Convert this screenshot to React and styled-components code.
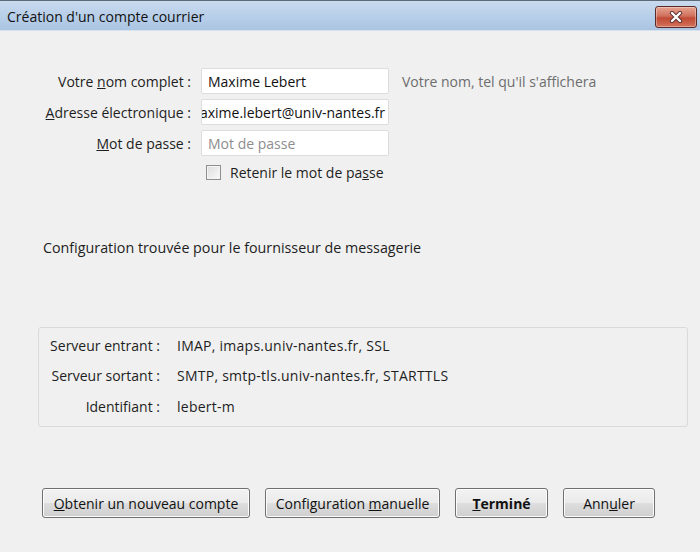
import styled, { createGlobalStyle } from 'styled-components';

const GlobalStyle = createGlobalStyle`
	html, body {
		margin: 0;
		padding: 0;
		background: #f0f0f0;
	}
	body {
		font-family: 'Open Sans', 'Noto Sans', sans-serif;
		font-size: 14px;
		color: #1e1e1e;
	}
`;

const Window = styled.div`
	width: 700px;
	height: 552px;
	display: flex;
	flex-direction: column;
	background: #f0f0f0;
	overflow: hidden;
`;

const TitleBar = styled.div`
	height: 31px;
	flex: none;
	display: flex;
	align-items: center;
	justify-content: space-between;
	padding: 0 3px 0 7px;
	box-sizing: border-box;
	background: linear-gradient(#c9daee, #b5cde8 60%, #aac4e2);
	border-top: 1px solid #5d6a7a;
	border-bottom: 1px solid #d6e2f0;
`;

const Title = styled.div`
	font-size: 14px;
	color: #111;
	padding-top: 2px;
`;

const CloseButton = styled.div`
	width: 40px;
	height: 20px;
	margin-top: 3px;
	border: 1px solid #5a2a2a;
	border-radius: 3px;
	background: linear-gradient(#e8a493, #d0715c 45%, #c04a35 55%, #d2735b);
	display: flex;
	align-items: center;
	justify-content: center;
	box-shadow: inset 0 0 0 1px rgba(255, 255, 255, 0.35);
`;

const Body = styled.div`
	flex: 1;
	display: flex;
	flex-direction: column;
	padding-top: 37px;
`;

const Form = styled.div`
	display: grid;
	grid-template-columns: 191px 188px auto;
	column-gap: 10px;
	row-gap: 5px;
	align-items: center;
`;

const Label = styled.div`
	text-align: right;
	white-space: nowrap;
`;

const Field = styled.div`
	height: 26px;
	box-sizing: border-box;
	border: 1px solid #dddddd;
	border-radius: 2px;
	background: #fff;
	display: flex;
	align-items: center;
	justify-content: ${(p) => (p.$scrolled ? 'flex-end' : 'flex-start')};
	padding: ${(p) => (p.$scrolled ? '0 3px 0 6px' : '0 6px')};
	overflow: hidden;
	white-space: nowrap;
	color: ${(p) => (p.$placeholder ? '#8d8d8d' : '#111')};
`;

const Hint = styled.div`
	color: #6d6d6d;
	padding-left: 3px;
	white-space: nowrap;
`;

const CheckRow = styled.label`
	grid-column: 2 / 4;
	display: flex;
	align-items: center;
	gap: 9px;
	margin-top: 2px;
	padding-left: 5px;
`;

const CheckBox = styled.span`
	width: 13px;
	height: 13px;
	border: 1px solid #8e8f8f;
	background: linear-gradient(135deg, #dcdcdc, #fbfbfb);
	box-shadow: inset 0 0 0 1px #f4f4f4;
`;

const Status = styled.div`
	margin: 56px 0 0 43px;
	font-size: 14.3px;
`;

const InfoBox = styled.div`
	margin: 70px 0 0 38px;
	width: 650px;
	height: 100px;
	box-sizing: border-box;
	border: 1px solid #dadada;
	border-radius: 3px;
	padding: 2px 0;
	display: grid;
	grid-template-columns: 121px auto;
	grid-auto-rows: 30.5px;
	column-gap: 17px;
	align-items: center;
`;

const InfoLabel = styled.div`
	text-align: right;
	white-space: nowrap;
`;

const InfoValue = styled.div`
	white-space: nowrap;
	letter-spacing: 0.25px;
`;

const ButtonRow = styled.div`
	display: flex;
	gap: 15px;
	margin: 61px 0 0 42px;
`;

const Button = styled.button`
	width: ${(p) => p.$w}px;
	height: 30px;
	box-sizing: border-box;
	border: 1px solid #707070;
	border-radius: 3px;
	background: linear-gradient(#f2f2f2, #ebebeb 48%, #dddddd 52%, #cfcfcf);
	box-shadow: inset 0 0 0 1px #fcfcfc;
	font-family: inherit;
	font-size: 14px;
	font-weight: ${(p) => (p.$default ? 700 : 400)};
	color: #111;
	padding: 0;
`;

function App() {
	return (
		<Window>
			<GlobalStyle />
			<TitleBar>
				<Title>Création d'un compte courrier</Title>
				<CloseButton>
					<svg width="14" height="12" viewBox="0 0 14 12">
						<path
							d="M3 2 L11 10 M11 2 L3 10"
							stroke="#5a3030"
							strokeWidth="4.2"
							strokeLinecap="round"
						/>
						<path
							d="M3 2 L11 10 M11 2 L3 10"
							stroke="#fff"
							strokeWidth="2.4"
							strokeLinecap="round"
						/>
					</svg>
				</CloseButton>
			</TitleBar>
			<Body>
				<Form>
					<Label>
						Votre <u>n</u>om complet :
					</Label>
					<Field>Maxime Lebert</Field>
					<Hint>Votre nom, tel qu'il s'affichera</Hint>
					<Label>
						<u>A</u>dresse électronique :
					</Label>
					<Field $scrolled>maxime.lebert@univ-nantes.fr</Field>
					<span />
					<Label>
						<u>M</u>ot de passe :
					</Label>
					<Field $placeholder>Mot de passe</Field>
					<span />
					<CheckRow>
						<CheckBox />
						<span>
							Retenir le mot de pa<u>s</u>se
						</span>
					</CheckRow>
				</Form>
				<Status>Configuration trouvée pour le fournisseur de messagerie</Status>
				<InfoBox>
					<InfoLabel>Serveur entrant :</InfoLabel>
					<InfoValue>IMAP, imaps.univ-nantes.fr, SSL</InfoValue>
					<InfoLabel>Serveur sortant :</InfoLabel>
					<InfoValue>SMTP, smtp-tls.univ-nantes.fr, STARTTLS</InfoValue>
					<InfoLabel>Identifiant :</InfoLabel>
					<InfoValue>lebert-m</InfoValue>
				</InfoBox>
				<ButtonRow>
					<Button $w={208}>
						<u>O</u>btenir un nouveau compte
					</Button>
					<Button $w={175}>
						Configuration <u>m</u>anuelle
					</Button>
					<Button $w={93} $default>
						<u>T</u>erminé
					</Button>
					<Button $w={92}>
						Ann<u>u</u>ler
					</Button>
				</ButtonRow>
			</Body>
		</Window>
	);
}

export default App;
